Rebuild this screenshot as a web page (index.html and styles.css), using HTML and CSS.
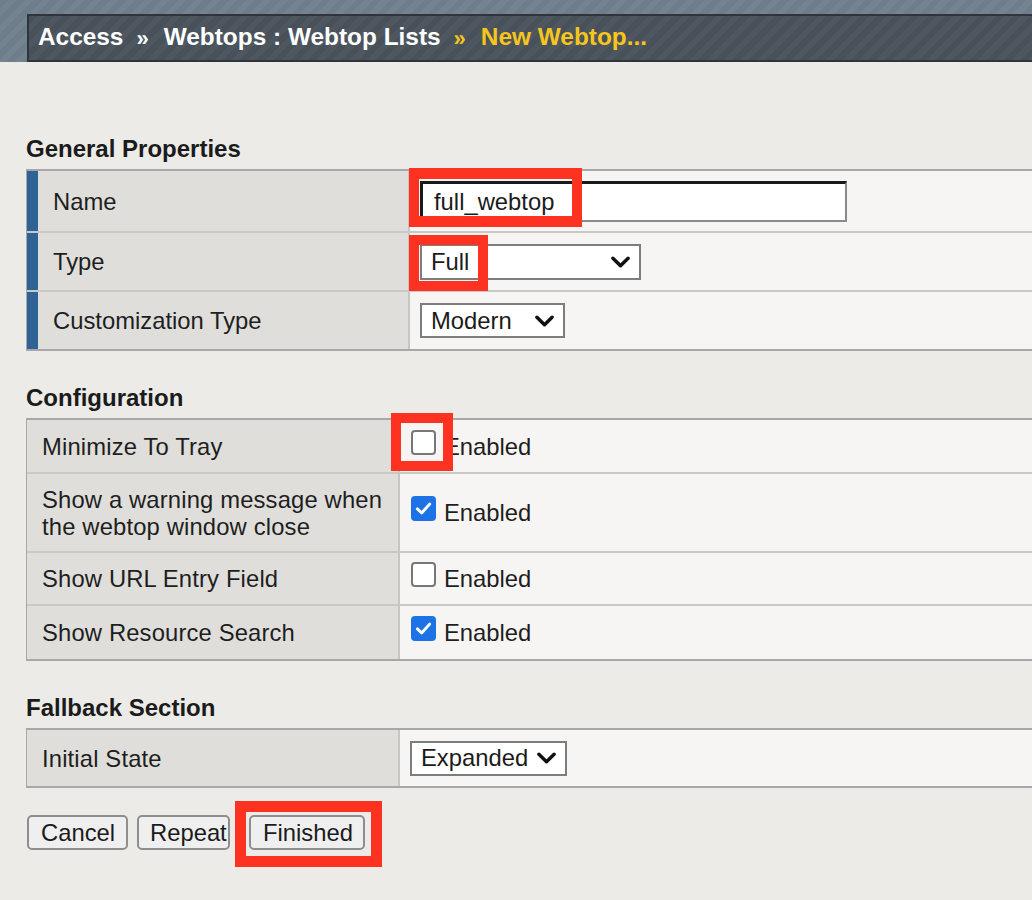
FILE: index.html
```html
<!DOCTYPE html>
<html lang="en">
<head>
<meta charset="utf-8">
<title>New Webtop</title>
<link rel="stylesheet" href="styles.css">
</head>
<body>
<header class="topband">
  <nav class="crumbbar">
    <span class="crumb">Access</span>
    <span class="sep">&raquo;</span>
    <span class="crumb">Webtops : Webtop Lists</span>
    <span class="sep sep-current">&raquo;</span>
    <span class="crumb crumb-current">New Webtop...</span>
  </nav>
</header>

<main class="content">
  <h2 class="section-title">General Properties</h2>
  <div class="panel panel-flagged">
    <div class="row row-name">
      <div class="label">Name</div>
      <div class="value">
        <div class="marked">
          <div class="textbox">full_webtop</div>
          <span class="highlight hl-name"></span>
        </div>
      </div>
    </div>
    <div class="row row-type">
      <div class="label">Type</div>
      <div class="value">
        <div class="marked">
          <div class="select select-type"><span>Full</span><svg class="chev" viewBox="0 0 20 12"><path d="M2 2 L10 10 L18 2"/></svg></div>
          <span class="highlight hl-type"></span>
        </div>
      </div>
    </div>
    <div class="row row-cust">
      <div class="label">Customization Type</div>
      <div class="value">
        <div class="select select-modern"><span>Modern</span><svg class="chev" viewBox="0 0 20 12"><path d="M2 2 L10 10 L18 2"/></svg></div>
      </div>
    </div>
  </div>

  <h2 class="section-title">Configuration</h2>
  <div class="panel panel-plain">
    <div class="row row-c1">
      <div class="label">Minimize To Tray</div>
      <div class="value value-check">
        <div class="marked">
          <span class="checkbox"></span>
          <span class="highlight hl-check"></span>
        </div>
        <span class="check-text">Enabled</span>
      </div>
    </div>
    <div class="row row-c2">
      <div class="label">Show a warning message when<br>the webtop window close</div>
      <div class="value value-check">
        <span class="checkbox checked"><svg viewBox="0 0 24 24"><path d="M5 12.5 L10 17 L19 7"/></svg></span>
        <span class="check-text">Enabled</span>
      </div>
    </div>
    <div class="row row-c3">
      <div class="label">Show URL Entry Field</div>
      <div class="value value-check">
        <span class="checkbox"></span>
        <span class="check-text">Enabled</span>
      </div>
    </div>
    <div class="row row-c4">
      <div class="label">Show Resource Search</div>
      <div class="value value-check">
        <span class="checkbox checked"><svg viewBox="0 0 24 24"><path d="M5 12.5 L10 17 L19 7"/></svg></span>
        <span class="check-text">Enabled</span>
      </div>
    </div>
  </div>

  <h2 class="section-title">Fallback Section</h2>
  <div class="panel panel-plain">
    <div class="row row-f1">
      <div class="label">Initial State</div>
      <div class="value value-fallback">
        <div class="select select-expanded"><span>Expanded</span><svg class="chev" viewBox="0 0 20 12"><path d="M2 2 L10 10 L18 2"/></svg></div>
      </div>
    </div>
  </div>

  <div class="actions">
    <button class="btn btn-cancel" type="button">Cancel</button>
    <button class="btn btn-repeat" type="button">Repeat</button>
    <div class="marked">
      <button class="btn btn-finished" type="button">Finished</button>
      <span class="highlight hl-finished"></span>
    </div>
  </div>
</main>
</body>
</html>
```

FILE: styles.css
```css
html, body {
  margin: 0;
  padding: 0;
  overflow: hidden;
}

body {
  background: #ecebe8;
  font-family: "Liberation Sans", Arial, sans-serif;
  font-size: 23.8px;
  color: #1e1e1e;
  width: 1032px;
  height: 900px;
}

/* ---------- top breadcrumb band ---------- */
.topband {
  height: 62px;
  box-sizing: border-box;
  padding: 14px 0 0 27px;
  background:
    repeating-linear-gradient(135deg, #6d7d8b 0 6px, #73838f 6px 12px);
}

.crumbbar {
  height: 48px;
  box-sizing: border-box;
  border: 2px solid #2f353b;
  border-right: 0;
  background:
    repeating-linear-gradient(135deg, #48515a 0 6px, #4e5760 6px 12px);
  display: flex;
  align-items: center;
  padding-left: 9px;
  padding-bottom: 2px;
  font-weight: bold;
  font-size: 24.4px;
  color: #ffffff;
  white-space: nowrap;
}

.sep {
  font-size: 22px;
  margin: 3px 15px 0 13px;
}

.sep-current,
.crumb-current {
  color: #f7c51c;
}

/* ---------- content ---------- */
.content {
  padding-left: 26px;
}

.section-title {
  margin: 33px 0 6px 0;
  font-size: 24px;
  line-height: 28px;
  font-weight: bold;
  color: #1b1b1b;
}

.section-title:first-child {
  margin-top: 73px;
}

.panel {
  width: 1030px;
  border-top: 2px solid #a8a8a8;
  border-bottom: 2px solid #a8a8a8;
  border-left: 1px solid #a8a8a8;
}

.row {
  display: flex;
}

.row + .row {
  border-top: 2px solid #c8c8c6;
}

.label {
  flex: none;
  box-sizing: border-box;
  background: #dfdedb;
  border-right: 2px solid #c6c6c4;
  display: flex;
  align-items: center;
  line-height: 27px;
}

.panel-flagged .label {
  width: 383px;
  border-left: 11px solid #2f6295;
  padding-left: 15px;
}

.panel-plain .label {
  width: 373px;
  padding-left: 15px;
  letter-spacing: 0.15px;
}

.value {
  flex: 1;
  background: #f6f5f3;
  display: flex;
  align-items: center;
  padding-left: 10px;
}

.row-name { height: 60px; }
.row-type { height: 57px; }
.row-cust { height: 57px; }

.row-c1 { height: 52px; }
.row-c2 { height: 77px; }
.row-c3 { height: 51px; }
.row-c4 { height: 53px; }

.row-f1 { height: 56px; }

/* ---------- controls ---------- */
.marked {
  position: relative;
  display: flex;
}

.highlight {
  position: absolute;
  box-sizing: border-box;
  border: 10px solid #fe3220;
  pointer-events: none;
}

.hl-name {
  left: -11px;
  top: -13px;
  width: 173px;
  height: 59px;
  border-width: 11px 10px;
}

.hl-type {
  left: -11px;
  top: -9px;
  width: 79px;
  height: 56px;
}

.hl-check {
  left: -20px;
  top: -17px;
  width: 62px;
  height: 58px;
}

.hl-finished {
  left: -14px;
  top: -14px;
  width: 147px;
  height: 66px;
  border-width: 11px;
}

.textbox {
  box-sizing: border-box;
  width: 427px;
  height: 41px;
  background: #ffffff;
  border-style: solid;
  border-width: 3px 2px 2px 3px;
  border-color: #1a1a1a #8a8a8a #8a8a8a #1a1a1a;
  padding-left: 11px;
  display: flex;
  align-items: center;
  color: #1b1b1b;
}

.select {
  box-sizing: border-box;
  height: 36px;
  background: #ffffff;
  border: 2px solid #7d7d7d;
  display: flex;
  align-items: center;
  padding: 0 9px 0 9px;
  color: #1b1b1b;
}

.select span {
  flex: 1;
}

.chev {
  width: 19px;
  height: 12px;
  flex: none;
  fill: none;
  stroke: #111111;
  stroke-width: 3.6;
  stroke-linecap: round;
  stroke-linejoin: round;
}

.select-type { width: 221px; }
.select-modern { width: 145px; height: 35px; }
.select-expanded { width: 157px; height: 35px; }

.value-fallback {
  padding-left: 10px;
}

.value-check {
  padding-left: 11px;
  gap: 8px;
}

.checkbox {
  box-sizing: border-box;
  width: 25px;
  height: 25px;
  border: 2px solid #777777;
  border-radius: 4px;
  background: #ffffff;
  display: flex;
  align-items: center;
  justify-content: center;
  margin-bottom: 8px;
}

.marked .checkbox {
  margin-bottom: 0;
}

.value-check > .marked {
  margin-bottom: 8px;
}

.checkbox.checked {
  background: #1d73e6;
  border-color: #1d73e6;
}

.checkbox svg {
  width: 21px;
  height: 21px;
  fill: none;
  stroke: #ffffff;
  stroke-width: 3.4;
  stroke-linecap: round;
  stroke-linejoin: round;
}

.check-text {
  line-height: 27px;
}

/* ---------- buttons ---------- */
.actions {
  display: flex;
  align-items: center;
  margin-top: 27px;
  padding-left: 1px;
}

.btn {
  box-sizing: border-box;
  height: 35px;
  background: #efefef;
  border: 2px solid #8e8e8e;
  border-radius: 5px;
  font-family: "Liberation Sans", Arial, sans-serif;
  font-size: 23.8px;
  color: #1b1b1b;
  padding: 0 0 0 12px;
  text-align: left;
  white-space: nowrap;
  overflow: hidden;
}

.btn-cancel { width: 101px; margin-right: 9px; }
.btn-repeat { width: 93px; margin-right: 19px; padding-left: 11px; }
.btn-finished { width: 116px; }
```
